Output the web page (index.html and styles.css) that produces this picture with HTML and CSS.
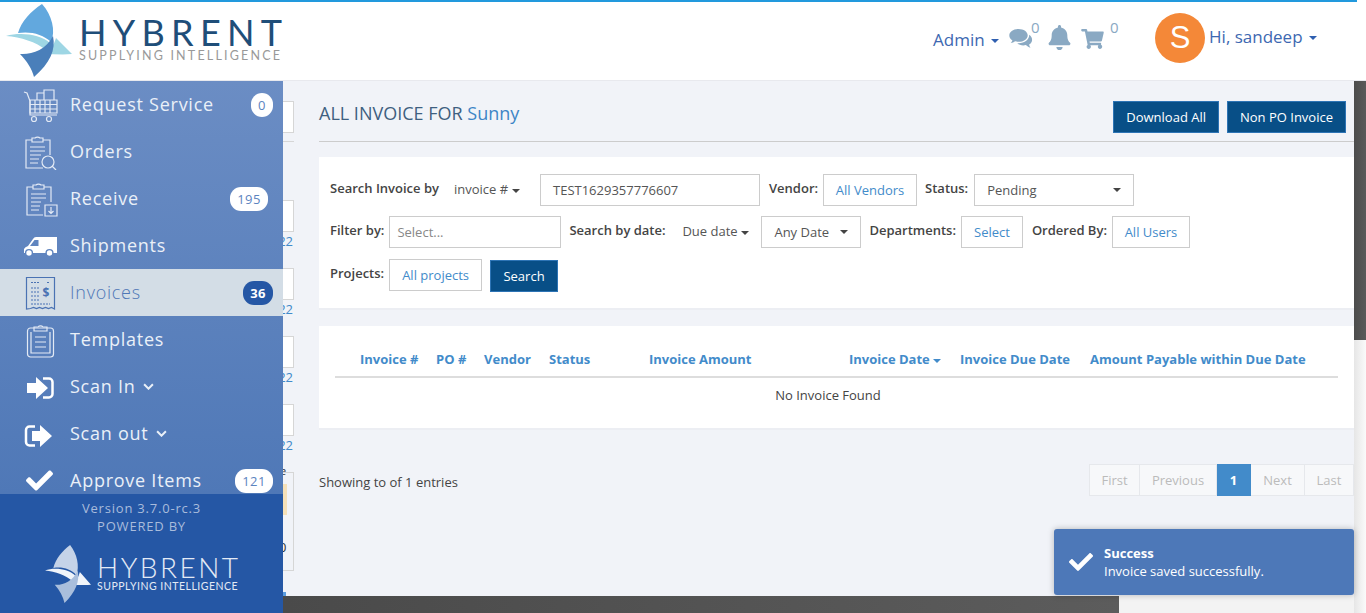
FILE: index.html
```html
<!DOCTYPE html>
<html>
  <head>
    <title>Invoices</title>
    <link rel="stylesheet" href="styles.css">
  </head>
  <body>
    <svg class="defs" width="0" height="0">
      <symbol id="sail" viewBox="6 4 66 73" preserveAspectRatio="none">
        <path class="sail-a" d="M42 4C31 11 21 22 18 33C30 31 43 34 51 42C56 31 52 15 42 4Z"/>
        <path class="sail-b" d="M6 36C20 32 40 34 50 43L46 50C36 42 21 37 6 36Z"/>
        <path class="sail-b" d="M56 38L72 54C63 55 53 54 44 54C50 50 54 45 56 38Z"/>
        <path class="sail-c" d="M53 36C56 50 50 63 34 77C32 69 27 61 20 54C31 55 46 50 53 36Z"/>
      </symbol>
      <symbol id="check" viewBox="0 0 512 512">
        <path d="M173.898 439.404l-166.4-166.4c-9.997-9.997-9.997-26.206 0-36.204l36.203-36.204c9.997-9.998 26.207-9.998 36.204 0L192 312.69 432.095 72.596c9.997-9.997 26.207-9.997 36.204 0l36.203 36.204c9.997 9.997 9.997 26.206 0 36.204l-294.4 294.401c-9.998 9.997-26.207 9.997-36.204-.001z"/>
      </symbol>
    </svg>

    <div class="topline"></div>
    <header class="topbar">
      <div class="logo">
        <svg class="logo-sail"><use href="#sail"/></svg>
        <div class="logo-text">
          <div class="logo-name">HYBRENT</div>
          <div class="logo-tag">SUPPLYING INTELLIGENCE</div>
        </div>
      </div>
      <div class="topbar-right">
        <span class="top-link">Admin <i class="caret caret-blue"></i></span>
        <svg class="top-icon icon-comments" viewBox="0 0 24 21">
          <path d="M10 1C4.8 1 .8 3.800 .8 7.400C.8 9.400 2 11.100 3.900 12.300C3.600 13.400 3 14.300 2.200 15.100C3.900 14.900 5.400 14.300 6.600 13.300C7.700 13.600 8.800 13.800 10 13.800C15.200 13.800 19.200 11 19.200 7.400C19.200 3.800 15.200 1 10 1Z"/>
          <path d="M20.700 6.800C20.900 11.600 16.200 15.200 10.100 15.200L8.800 15.200C10.200 16.600 12.400 17.400 14.800 17.400C15.700 17.400 16.600 17.300 17.400 17.100C18.500 18.300 20 19.300 22 19.800C21.300 18.800 20.800 17.700 20.600 16.500C22.500 15.400 23.600 13.700 23.600 11.900C23.600 9.800 22.500 8 20.700 6.800Z"/>
        </svg>
        <sup class="top-count count-comments">0</sup>
        <svg class="top-icon icon-bell" viewBox="0 0 448 512">
          <path d="M224 512c35.320 0 63.970-28.650 63.970-64H160.030c0 35.350 28.650 64 63.970 64zm215.390-149.710c-19.320-20.760-55.470-51.990-55.470-154.290 0-77.700-54.480-139.900-127.940-155.160V32c0-17.670-14.320-32-31.980-32s-31.980 14.330-31.980 32v20.840C118.560 68.100 64.080 130.300 64.080 208c0 102.300-36.150 133.530-55.470 154.290-6 6.450-8.660 14.160-8.610 21.710.11 16.400 12.980 32 32.100 32h383.800c19.120 0 32-15.600 32.100-32 .05-7.550-2.610-15.270-8.610-21.710z"/>
        </svg>
        <svg class="top-icon icon-cart" viewBox="0 0 576 512">
          <path d="M528.120 301.319l47.273-208C578.806 78.301 567.391 64 551.990 64H159.208l-9.166-44.810C147.758 8.021 137.930 0 126.529 0H24C10.745 0 0 10.745 0 24v16c0 13.255 10.745 24 24 24h69.883l70.248 343.435C147.325 417.100 136 435.222 136 456c0 30.928 25.072 56 56 56s56-25.072 56-56c0-15.674-6.447-29.835-16.824-40h209.647C430.447 426.165 424 440.326 424 456c0 30.928 25.072 56 56 56s56-25.072 56-56c0-22.172-12.888-41.332-31.579-50.405l5.517-24.276c3.413-15.018-8.002-29.319-23.403-29.319H218.117l-6.545-32h293.145c11.206 0 20.920-7.754 23.403-18.681z"/>
        </svg>
        <sup class="top-count count-cart">0</sup>
        <span class="avatar">S</span>
        <span class="top-link top-user">Hi, sandeep <i class="caret caret-blue"></i></span>
      </div>
    </header>

    <div class="layout">
      <aside class="sidebar">
        <nav class="side-nav">
          <a class="side-item">
            <svg class="side-icon line" viewBox="0 0 36 36">
              <path d="M2 5l3 1 3 8v14h27"/>
              <path d="M8 13h27v13H8zM8 17.500h27M8 22h27M13 13v13M18 13v13M23 13v13M28 13v13"/>
              <path d="M15 13V6h7v7M22 13V3h10v10"/>
              <circle cx="12" cy="32" r="2.500"/><circle cx="27" cy="32" r="2.500"/>
            </svg>
            <span class="side-label">Request Service</span>
            <span class="badge">0</span>
          </a>
          <a class="side-item">
            <svg class="side-icon line" viewBox="0 0 36 36">
              <path d="M21 34H4V6h6M21 6h7v15"/>
              <path d="M10 8V4h3a3 2 0 0 1 5 0h3v4z"/>
              <path d="M8 13h15M8 17h15M8 21h11M8 25h9M8 29h8"/>
              <circle cx="26" cy="28" r="6"/><path d="M30 32l4 4"/>
            </svg>
            <span class="side-label">Orders</span>
          </a>
          <a class="side-item">
            <svg class="side-icon line" viewBox="0 0 36 36">
              <path d="M21 34H5V6h6M22 6h7v15"/>
              <path d="M11 8V4h3a3 2 0 0 1 5 0h3v4z"/>
              <path d="M9 13h15M9 17h15M9 21h10M9 25h9M9 29h8"/>
              <path d="M23 24h12v11H23zM29 26v6M26.500 30l2.500 2.500 2.500-2.500"/>
            </svg>
            <span class="side-label">Receive</span>
            <span class="badge badge-receive">195</span>
          </a>
          <a class="side-item">
            <svg class="side-icon solid truck" viewBox="0 0 36 36">
              <path fill-rule="evenodd" d="M14 9H35V25H2V21Q3 19 6 18L11 11Q12 9 14 9ZM12.500 12L8 18H16.500V12Z"/>
              <circle class="wheel" cx="7" cy="25" r="3.400"/><circle class="wheel" cx="27.500" cy="25" r="3.400"/>
            </svg>
            <span class="side-label">Shipments</span>
          </a>
          <a class="side-item side-active">
            <svg class="side-icon line" viewBox="0 0 36 36">
              <path d="M4.500 34V2.500h28V34l-3-1.500-3 1-3-1-3 1-3-1-3 1-3-1-3 1z"/>
              <path d="M9 7.500h9M25 7.500h3M9 13h8M9 17h8M9 21h8M9 25h8M9 29h19" stroke-dasharray="2 1"/>
              <text class="invoice-dollar" x="20.500" y="22">$</text>
            </svg>
            <span class="side-label">Invoices</span>
            <span class="badge badge-active">36</span>
          </a>
          <a class="side-item">
            <svg class="side-icon line" viewBox="0 0 36 36">
              <rect x="5.500" y="6" width="26" height="29" rx="3"/>
              <path d="M9 10v21h19V10"/>
              <path d="M12 8V5h4a3 2.500 0 0 1 5 0h4v4H12zM13 15h11M13 20h11M13 25h11"/>
            </svg>
            <span class="side-label">Templates</span>
          </a>
          <a class="side-item">
            <svg class="side-icon solid" viewBox="0 0 36 36">
              <path d="M5 14h9V8l12 11-12 11v-6H5z"/>
              <path class="bracket" d="M21 9.500h6a3.500 3.500 0 0 1 3.500 3.500v12a3.500 3.500 0 0 1-3.500 3.500h-6"/>
            </svg>
            <span class="side-label">Scan In <svg class="chevron" viewBox="0 0 10 6"><path d="M1 1l4 4 4-4"/></svg></span>
          </a>
          <a class="side-item">
            <svg class="side-icon solid" viewBox="0 0 36 36">
              <path class="bracket" d="M13 10.500H7.500A3.500 3.500 0 0 0 4 14v12a3.500 3.500 0 0 0 3.500 3.500H13"/>
              <path d="M10 15h8V9l12 11-12 11v-6h-8z"/>
            </svg>
            <span class="side-label">Scan out <svg class="chevron" viewBox="0 0 10 6"><path d="M1 1l4 4 4-4"/></svg></span>
          </a>
          <a class="side-item">
            <svg class="side-icon solid side-check"><use href="#check"/></svg>
            <span class="side-label">Approve Items</span>
            <span class="badge">121</span>
          </a>
        </nav>
        <div class="side-foot">
          <div class="side-version">Version 3.7.0-rc.3</div>
          <div class="side-powered">POWERED BY</div>
          <div class="foot-logo">
            <svg class="foot-sail"><use href="#sail"/></svg>
            <div>
              <div class="foot-name">HYBRENT</div>
              <div class="foot-tag">SUPPLYING INTELLIGENCE</div>
            </div>
          </div>
        </div>
      </aside>

      <div class="content">
        <div class="content-body">
          <!-- list column that sticks out from under the sidebar -->
          <div class="under">
            <div class="under-box under-first"></div>
            <div class="under-line"></div>
            <div class="under-box under-second"></div>
            <div class="under-date">22</div>
            <div class="under-box"></div>
            <div class="under-date">22</div>
            <div class="under-box"></div>
            <div class="under-date">22</div>
            <div class="under-box"></div>
            <div class="under-date">22</div>
            <div class="under-card">
              <span class="under-e">e</span>
              <div class="under-tan"></div>
              <span class="under-zero">0</span>
            </div>
            <div class="under-blue"></div>
          </div>

          <main class="page">
            <div class="title-row">
              <h1 class="page-title">ALL INVOICE FOR <span class="title-name">Sunny</span></h1>
              <div class="title-btns">
                <button class="btn">Download All</button>
                <button class="btn">Non PO Invoice</button>
              </div>
            </div>

            <section class="card search-card">
              <div class="form-row">
                <label class="form-label w-search">Search Invoice by</label>
                <span class="drop w-invoice">invoice # <i class="caret caret-drop"></i></span>
                <div class="field w-number">TEST1629357776607</div>
                <label class="form-label label-vendor">Vendor:</label>
                <button class="pick w-vendors">All Vendors</button>
                <label class="form-label label-status">Status:</label>
                <div class="field w-status">Pending <i class="caret"></i></div>
              </div>
              <div class="form-row">
                <label class="form-label">Filter by:</label>
                <div class="field w-filter field-muted">Select...</div>
                <label class="form-label w-bydate">Search by date:</label>
                <span class="drop w-due">Due date <i class="caret caret-drop"></i></span>
                <div class="field w-any">Any Date <i class="caret"></i></div>
                <label class="form-label">Departments:</label>
                <button class="pick">Select</button>
                <label class="form-label label-ordered">Ordered By:</label>
                <button class="pick w-users">All Users</button>
              </div>
              <div class="form-row">
                <label class="form-label">Projects:</label>
                <button class="pick">All projects</button>
                <button class="btn btn-search">Search</button>
              </div>
            </section>

            <section class="card table-card">
              <table class="invoices">
                <colgroup>
                  <col class="c1"><col class="c2"><col class="c3"><col class="c4"><col class="c5">
                  <col class="c6"><col class="c7"><col class="c8"><col class="c9"><col class="c10">
                </colgroup>
                <thead>
                  <tr>
                    <th></th>
                    <th>Invoice #</th>
                    <th>PO #</th>
                    <th>Vendor</th>
                    <th>Status</th>
                    <th>Invoice Amount</th>
                    <th>Invoice Date <i class="caret caret-th"></i></th>
                    <th>Invoice Due Date</th>
                    <th>Amount Payable within Due Date</th>
                    <th></th>
                  </tr>
                </thead>
                <tbody>
                  <tr><td colspan="9">No Invoice Found</td></tr>
                </tbody>
              </table>
            </section>

            <div class="list-foot">
              <span class="list-count">Showing to of 1 entries</span>
              <ul class="pager">
                <li class="pg-first">First</li>
                <li class="pg-prev">Previous</li>
                <li class="pg-on">1</li>
                <li class="pg-next">Next</li>
                <li class="pg-last">Last</li>
              </ul>
            </div>
          </main>
        </div>
        <div class="bottom-strip"><div class="bottom-dark"></div></div>
      </div>

      <div class="scrollbar"><div class="scroll-thumb"></div></div>
    </div>

    <div class="toast">
      <svg class="toast-check"><use href="#check"/></svg>
      <div>
        <div class="toast-title">Success</div>
        <div>Invoice saved successfully.</div>
      </div>
    </div>
  </body>
</html>
```

FILE: styles.css
```css
* {
  box-sizing: border-box;
}
html, body {
  margin: 0;
  height: 613px;
  overflow: hidden;
}
body {
  font-family: "Open Sans", sans-serif;
  font-size: 13px;
  color: #444;
  background: #fff;
  display: flex;
  flex-direction: column;
}
.defs {
  position: absolute;
}
.topline {
  height: 2px;
  margin-right: 9px;
  background: #2299dd;
}

/* top bar */
.topbar {
  height: 79px;
  display: flex;
  align-items: flex-start;
  border-bottom: 1px solid #e8e9ee;
}
.logo {
  display: flex;
  width: 290px;
}
.logo-sail {
  width: 66px;
  height: 73px;
  margin: 2px 7px 0 6px;
  --sail-a: #62a8de;
  --sail-b: #9ed6e4;
  --sail-c: #4a7fba;
}
.sail-a { fill: var(--sail-a); }
.sail-b { fill: var(--sail-b); }
.sail-c { fill: var(--sail-c); }
.logo-name {
  margin-top: 15px;
  font-family: Lato, sans-serif;
  font-weight: 400;
  font-size: 36px;
  line-height: 30px;
  letter-spacing: 6.300px;
  color: #1f4e79;
}
.logo-tag {
  margin-top: 2px;
  font-family: Lato, sans-serif;
  font-size: 12.500px;
  line-height: 14px;
  letter-spacing: 2.200px;
  color: #999;
  white-space: nowrap;
}
.topbar-right {
  margin-left: auto;
  display: flex;
  align-items: flex-start;
  padding-right: 49px;
  position: relative;
}
.top-link {
  color: #3d68b1;
  font-size: 17px;
  line-height: 22px;
  margin-top: 27px;
  white-space: nowrap;
}
.top-icon {
  fill: #8aa9c3;
}
.icon-comments {
  width: 25px;
  height: 21px;
  margin: 26px 0 0 9px;
}
.count-comments {
  margin-left: -2px;
}
.top-count {
  font-size: 15px;
  line-height: 18px;
  margin-top: 16px;
  color: #8aa9c3;
  width: 9px;
}
.icon-bell {
  width: 23px;
  height: 25px;
  margin: 23px 0 0 8px;
}
.icon-cart {
  width: 23px;
  height: 20px;
  margin: 27px 0 0 10px;
}
.count-cart {
  margin-left: 6px;
}
.avatar {
  width: 50px;
  height: 50px;
  margin: 11px 0 0 36px;
  border-radius: 50%;
  background: #f48838;
  color: #fff;
  font-family: "Liberation Sans", sans-serif;
  font-size: 31px;
  line-height: 50px;
  text-align: center;
}
.top-user {
  margin: 24px 0 0 4px;
}
.caret {
  display: inline-block;
  width: 0;
  height: 0;
  margin-left: 2px;
  vertical-align: middle;
  border-top: 4px solid #444;
  border-left: 4px solid transparent;
  border-right: 4px solid transparent;
}
.caret-blue {
  border-top-color: #2f5fb0;
}
.caret-drop {
  margin-left: 0;
}
.caret-th {
  margin-left: 0;
  border-top-color: #428bca;
}

/* main row */
.layout {
  flex: 1;
  display: flex;
  min-height: 0;
}
.sidebar {
  width: 283px;
  flex-shrink: 0;
  display: flex;
  flex-direction: column;
  position: relative;
  z-index: 1;
}
.side-nav {
  flex: 1;
  min-height: 0;
  overflow: hidden;
  background: linear-gradient(#6b8dc4, #4f78b7);
}
.side-item {
  display: flex;
  align-items: center;
  height: 47px;
  padding: 0 10px 0 22px;
  color: #eaf0f8;
}
.side-icon {
  width: 36px;
  height: 36px;
  margin-right: 12px;
  flex-shrink: 0;
}
.line {
  fill: none;
  stroke: #e3eaf5;
  stroke-width: 1.200;
}
.solid {
  fill: #fff;
}
.wheel {
  stroke: #5f84bf;
  stroke-width: 1.400;
}
.bracket {
  fill: none;
  stroke: #fff;
  stroke-width: 2.500;
}
.side-check {
  width: 27px;
  height: 27px;
  margin: 0 17px 0 4px;
}
.side-label {
  padding-bottom: 2px;
  font-size: 18px;
  letter-spacing: .75px;
  white-space: nowrap;
}
.chevron {
  width: 11px;
  height: 7px;
  margin-left: 2px;
  vertical-align: 3px;
  fill: none;
  stroke: currentColor;
  stroke-width: 1.800;
}
.side-active {
  background: #d3dde6;
  color: #4f77b6;
}
.side-active .line {
  stroke: #4a72b3;
}
.side-active .side-label {
  font-weight: 300;
}
.invoice-dollar {
  fill: #4a72b3;
  stroke: none;
  font-size: 12px;
  font-weight: 700;
}
.badge {
  margin-left: auto;
  min-width: 22px;
  height: 24px;
  padding: 0 7px;
  border-radius: 11px;
  background: #fff;
  color: #5c84bf;
  font-size: 13px;
  line-height: 25px;
  letter-spacing: .5px;
  text-align: center;
}
.badge-receive {
  margin-right: 5px;
}
.badge-active {
  background: #2557a5;
  color: #fff;
  font-weight: 700;
}
.side-foot {
  height: 119px;
  flex-shrink: 0;
  background: #2557a5;
  text-align: center;
  color: #a9bcdc;
  font-size: 13px;
  padding-top: 5px;
  letter-spacing: .8px;
}
.side-version, .side-powered {
  line-height: 18px;
}
.foot-logo {
  display: flex;
  margin: 10px 0 0 45px;
  text-align: left;
  color: #e3eaf5;
}
.foot-sail {
  width: 46px;
  height: 58px;
  margin-right: 6px;
  --sail-a: #c5d3e8;
  --sail-b: #f0f4fa;
  --sail-c: #a9bedc;
}
.foot-name {
  margin-top: 10px;
  font-family: Lato, sans-serif;
  font-weight: 300;
  font-size: 28px;
  line-height: 24px;
  letter-spacing: 2.500px;
}
.foot-tag {
  margin-top: 1px;
  font-family: Lato, sans-serif;
  font-size: 10.500px;
  line-height: 12px;
  letter-spacing: .5px;
  white-space: nowrap;
}

/* content */
.content {
  flex: 1;
  min-width: 0;
  display: flex;
  flex-direction: column;
  background: #f1f3f8;
}
.content-body {
  flex: 1;
  min-height: 0;
  display: flex;
}
.under {
  width: 11px;
  flex-shrink: 0;
}
.under-box {
  height: 32px;
  background: #fff;
  border: 1px solid #d6d6d6;
  border-left: 0;
}
.under-first {
  margin-top: 20px;
}
.under-line {
  height: 1px;
  margin-top: 8px;
  background: #d6d6d6;
}
.under-second {
  margin-top: 58px;
}
.under-date {
  display: flex;
  justify-content: flex-end;
  height: 36px;
  padding-right: 1px;
  line-height: 18px;
  color: #428bca;
  font-size: 13px;
}
.under-card {
  height: 99px;
  border: 1px solid #d6d6d6;
  border-left: 0;
  position: relative;
}
.under-e {
  position: absolute;
  left: -3px;
  top: -10px;
  font-size: 11px;
  color: #333;
}
.under-tan {
  width: 4px;
  height: 31px;
  margin-top: 11px;
  background: #f5e0b8;
}
.under-zero {
  position: absolute;
  left: -4px;
  top: 65px;
  font-size: 13px;
  color: #333;
}
.under-blue {
  width: 3px;
  height: 5px;
  margin-top: 21px;
  background: #5a9ce0;
}
.page {
  flex: 1;
  min-width: 0;
  padding: 20px 0 0 25px;
}
.title-row {
  display: flex;
  justify-content: space-between;
  height: 41px;
  padding-right: 8px;
  border-bottom: 1px solid #ccc;
}
.page-title {
  margin: 0;
  font-size: 18px;
  font-weight: 400;
  line-height: 25px;
  color: #3f5f80;
}
.title-name {
  color: #3d85c6;
}
.title-btns {
  display: flex;
  gap: 8px;
}
.btn {
  height: 32px;
  padding: 0 12px;
  background: #084f87;
  border: 1px solid #2d74b5;
  color: #fff;
  font-family: inherit;
  font-size: 13px;
}
.card {
  background: #fff;
  border-bottom: 2px solid #eceef3;
}
.search-card {
  height: 153px;
  margin-top: 15px;
  padding: 17px 0 0 11px;
}
.form-row {
  display: flex;
  align-items: flex-start;
  gap: 5px;
  height: 32px;
  margin-bottom: 10px;
  white-space: nowrap;
}
.form-row:nth-child(2) {
  margin-bottom: 11px;
}
.form-label {
  font-weight: 600;
  font-size: 13px;
  line-height: 28px;
  color: #444;
  margin-left: 3px;
}
.form-label:first-child {
  margin-left: 0;
}
.label-vendor { margin-left: 4px; }
.label-status { margin-right: 1px; }
.label-ordered { margin-left: 4px; }
.w-search { width: 119px; }
.w-bydate { width: 108px; }
.drop {
  line-height: 31px;
  color: #555;
}
.w-invoice { width: 81px; }
.w-due { width: 74px; }
.field {
  height: 32px;
  padding: 0 12px;
  background: #fff;
  border: 1px solid #ccc;
  color: #555;
  line-height: 31px;
  display: flex;
  align-items: center;
  justify-content: space-between;
}
.w-number { width: 220px; }
.w-status { width: 160px; }
.w-filter { width: 172px; padding: 0 7px; }
.w-any { width: 100px; }
.field-muted {
  color: #888;
}
.pick {
  height: 32px;
  padding: 0 12px;
  background: #fff;
  border: 1px solid #ccc;
  color: #428bca;
  font-family: inherit;
  font-size: 13px;
}
.w-vendors { width: 94px; padding: 0; }
.w-users { width: 78px; padding: 0; }
.btn-search {
  width: 68px;
  margin: 1px 0 0 3px;
  padding: 0;
}
.table-card {
  height: 104px;
  margin-top: 16px;
  padding: 0 16px;
}
.invoices {
  width: 1003px;
  table-layout: fixed;
  border-collapse: collapse;
}
.c1 { width: 17px; }
.c2 { width: 76px; }
.c3 { width: 48px; }
.c4 { width: 65px; }
.c5 { width: 100px; }
.c6 { width: 200px; }
.c7 { width: 111px; }
.c8 { width: 130px; }
.c9 { width: 239px; }
.c10 { width: 17px; }
.invoices th {
  height: 51px;
  padding: 16px 8px 0;
  border-bottom: 2px solid #ddd;
  text-align: left;
  color: #428bca;
  font-size: 13px;
  font-weight: 700;
  white-space: nowrap;
}
.invoices td {
  height: 34px;
  text-align: center;
  color: #444;
}
.list-foot {
  display: flex;
  justify-content: space-between;
  align-items: center;
  height: 32px;
  margin-top: 34px;
}
.list-count {
  padding-top: 4px;
}
.pager {
  display: flex;
  margin: 0;
  padding: 0;
  list-style: none;
  line-height: 30px;
  color: #bbb;
}
.pager li {
  height: 32px;
  text-align: center;
  background: #f7f8fa;
  border: 1px solid #e6e8ec;
  border-left: 0;
}
.pager .pg-first { width: 51px; border-left: 1px solid #e6e8ec; }
.pg-prev { width: 77px; }
.pg-next { width: 54px; }
.pg-last { width: 49px; }
.pager .pg-on {
  width: 34px;
  background: #428bca;
  border-color: #428bca;
  color: #fff;
  font-weight: 700;
}
.bottom-strip {
  height: 17px;
  flex-shrink: 0;
  background: #f3f3f3;
}
.bottom-dark {
  width: 836px;
  height: 100%;
  background: linear-gradient(90deg, #4a4a4a, #5c5c5c);
}
.scrollbar {
  width: 12px;
  flex-shrink: 0;
  background: linear-gradient(90deg, #e6e6e6, #fafafa);
}
.scroll-thumb {
  height: 259px;
  background: linear-gradient(90deg, #4c4c4c, #5a5a5a);
}

/* notification */
.toast {
  position: absolute;
  left: 1054px;
  top: 529px;
  width: 300px;
  height: 66px;
  display: flex;
  align-items: center;
  background: #4d78b8;
  border-radius: 3px;
  box-shadow: 0 0 6px rgba(0, 0, 0, .25);
  color: #fff;
  line-height: 18px;
}
.toast-check {
  width: 24px;
  height: 24px;
  margin: 0 11px 0 15px;
  fill: #fff;
}
.toast-title {
  font-weight: 700;
}
```
